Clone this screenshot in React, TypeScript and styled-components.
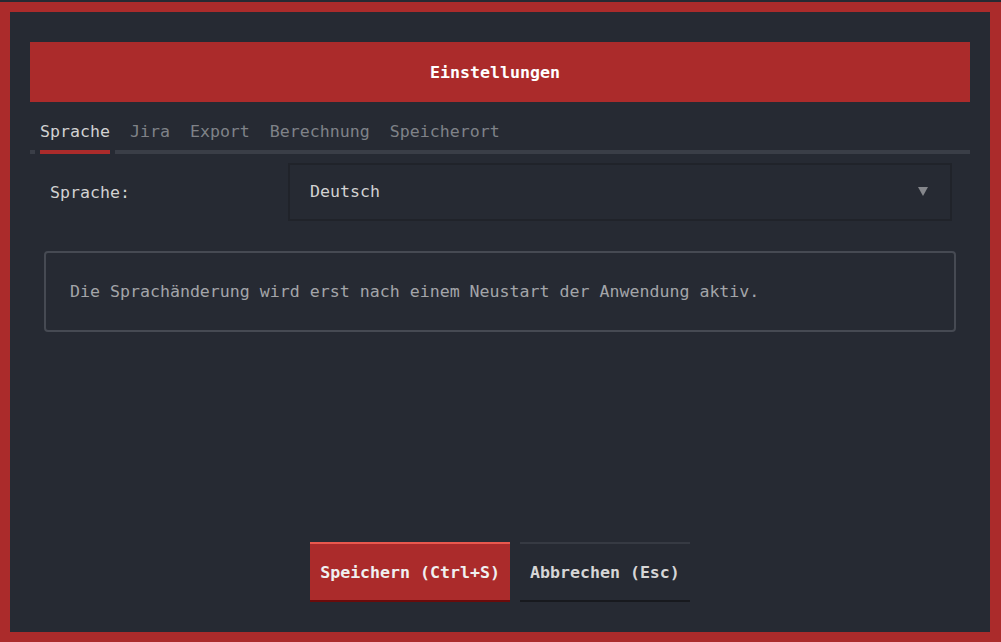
import React, { useState } from "react";
import styled, { createGlobalStyle } from "styled-components";

const GlobalStyle = createGlobalStyle`
  html, body {
    margin: 0;
    padding: 0;
    background-color: #262a33;
  }
  #root {
    padding-top: 2px;
  }
`;

const Window = styled.div`
  box-sizing: border-box;
  height: 640px;
  border: 10px solid #ab2b2b;
  border-right-width: 11px;
  background-color: #262a33;
  padding: 30px 20px;
  display: flex;
  flex-direction: column;
  font-family: "DejaVu Sans Mono", "Liberation Mono", monospace;
  font-size: 16.6px;
`;

const Header = styled.div`
  height: 60px;
  background-color: #ab2b2b;
  color: #ffffff;
  font-weight: bold;
  display: flex;
  align-items: center;
  justify-content: center;
  padding-right: 10px;
`;

const TabBar = styled.div`
  display: flex;
  margin-top: 10px;
  height: 38px;
  align-items: center;
`;

const Tab = styled.div<{ $active?: boolean }>`
  padding: 0 10px;
  color: ${(p) => (p.$active ? "#d2d2d2" : "#7f8288")};
  cursor: pointer;
`;

const Track = styled.div`
  display: flex;
  height: 4px;
  gap: 5px;
`;

const TrackPiece = styled.div<{ $width?: number; $active?: boolean }>`
  background-color: ${(p) => (p.$active ? "#ab2b2b" : "#3a3e47")};
  ${(p) => (p.$width ? `width: ${p.$width}px;` : "flex: 1;")}
`;

const Row = styled.div`
  display: flex;
  align-items: center;
  margin-top: 9px;
  padding-left: 20px;
`;

const Label = styled.div`
  width: 238px;
  color: #d2d2d2;
`;

const Select = styled.div`
  box-sizing: border-box;
  flex: 1;
  margin-right: 18px;
  height: 58px;
  border: 2px solid #20232a;
  padding: 0 20px 1px;
  display: flex;
  align-items: center;
  justify-content: space-between;
  color: #d2d2d2;
`;

const Arrow = styled.span`
  width: 0;
  height: 0;
  border-left: 5px solid transparent;
  border-right: 5px solid transparent;
  border-top: 9px solid #85878c;
  margin-right: 2px;
`;

const Notice = styled.div`
  box-sizing: border-box;
  margin: 30px 14px 0;
  height: 81px;
  border: 2px solid #464a53;
  border-radius: 4px;
  padding: 0 24px;
  display: flex;
  align-items: center;
  color: #a3a5a9;
`;

const Spacer = styled.div`
  flex: 1;
`;

const Actions = styled.div`
  display: flex;
  justify-content: center;
  gap: 10px;
`;

const Button = styled.button<{ $primary?: boolean }>`
  box-sizing: border-box;
  height: 60px;
  padding: 0 10px;
  border: none;
  border-top: 2px solid ${(p) => (p.$primary ? "#e9584e" : "#363a43")};
  border-bottom: 2px solid ${(p) => (p.$primary ? "#6a0b0b" : "#17191e")};
  background-color: ${(p) => (p.$primary ? "#ab2b2b" : "#262a33")};
  color: ${(p) => (p.$primary ? "#f0f0f0" : "#d6d6d6")};
  font-family: inherit;
  font-size: 16.6px;
  font-weight: bold;
  cursor: pointer;
`;

const tabs = ["Sprache", "Jira", "Export", "Berechnung", "Speicherort"];

export default function App() {
  const [active, setActive] = useState(0);

  return (
    <>
      <GlobalStyle />
      <Window>
        <Header>Einstellungen</Header>
        <TabBar>
          {tabs.map((t, i) => (
            <Tab key={t} $active={i === active} onClick={() => setActive(i)}>
              {t}
            </Tab>
          ))}
        </TabBar>
        <Track>
          <TrackPiece $width={5} />
          <TrackPiece $width={70} $active />
          <TrackPiece />
        </Track>
        <Row>
          <Label>Sprache:</Label>
          <Select>
            <span>Deutsch</span>
            <Arrow />
          </Select>
        </Row>
        <Notice>Die Sprachänderung wird erst nach einem Neustart der Anwendung aktiv.</Notice>
        <Spacer />
        <Actions>
          <Button $primary>Speichern (Ctrl+S)</Button>
          <Button>Abbrechen (Esc)</Button>
        </Actions>
      </Window>
    </>
  );
}
